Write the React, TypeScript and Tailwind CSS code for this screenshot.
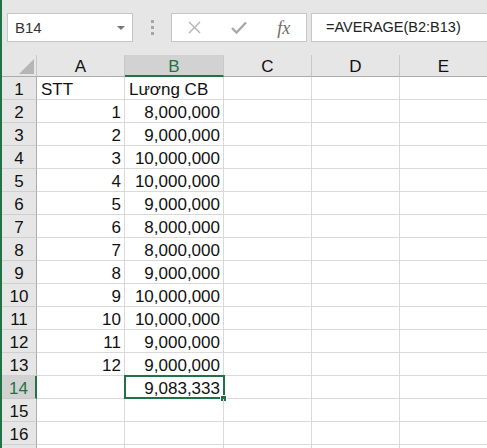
import React from "react";

const cols = ["A", "B", "C", "D", "E"];

const data: { a: string; b: string }[] = [
  { a: "STT", b: "Lương CB" },
  { a: "1", b: "8,000,000" },
  { a: "2", b: "9,000,000" },
  { a: "3", b: "10,000,000" },
  { a: "4", b: "10,000,000" },
  { a: "5", b: "9,000,000" },
  { a: "6", b: "8,000,000" },
  { a: "7", b: "8,000,000" },
  { a: "8", b: "9,000,000" },
  { a: "9", b: "10,000,000" },
  { a: "10", b: "10,000,000" },
  { a: "11", b: "9,000,000" },
  { a: "12", b: "9,000,000" },
  { a: "", b: "9,083,333" },
  { a: "", b: "" },
  { a: "", b: "" },
  { a: "", b: "" },
];

export default function App() {
  return (
    <div className="w-[487px] h-[448px] overflow-hidden bg-white flex font-['Liberation_Sans',Arial,sans-serif] text-[#111]">
      <div className="w-[2px] shrink-0 bg-[#217346]" />
      <div className="flex flex-col w-[485px] shrink-0 overflow-hidden">
        {/* Formula bar */}
        <div className="h-[55px] shrink-0 bg-[#e6e6e6] pt-[13px] flex items-start">
          <div className="ml-[5px] w-[126px] h-[29px] shrink-0 bg-white border border-[#c6c6c6] flex items-center justify-between pl-[7px] pr-[7px]">
            <span className="text-[15px] text-[#333] leading-none">B14</span>
            <span className="w-0 h-0 border-l-[4px] border-r-[4px] border-t-[4px] border-l-transparent border-r-transparent border-t-[#777]" />
          </div>
          <div className="w-[38px] h-[29px] shrink-0 flex flex-col items-center justify-center gap-[3px]">
            <span className="w-[3px] h-[3px] bg-[#a6a6a6]" />
            <span className="w-[3px] h-[3px] bg-[#a6a6a6]" />
            <span className="w-[3px] h-[3px] bg-[#a6a6a6]" />
          </div>
          <div className="w-[136px] h-[29px] shrink-0 bg-white border border-[#c6c6c6] flex items-center">
            <div className="w-[45px] h-full flex items-center justify-center">
              <svg width="13" height="13" viewBox="0 0 13 13">
                <path d="M1 1L12 12M12 1L1 12" stroke="#b3b3b3" strokeWidth="1.4" fill="none" />
              </svg>
            </div>
            <div className="w-[45px] h-full flex items-center justify-center">
              <svg width="16" height="13" viewBox="0 0 16 13">
                <path d="M1 7L5.5 11.5L15 1.5" stroke="#a8a8a8" strokeWidth="2.4" fill="none" />
              </svg>
            </div>
            <div className="w-[45px] h-full flex items-center justify-center">
              <span className="font-['Liberation_Serif',serif] italic text-[18px] text-[#6b6b6b] leading-none">fx</span>
            </div>
          </div>
          <div className="ml-[4px] w-[200px] h-[29px] shrink-0 bg-white border border-[#c6c6c6] flex items-center pl-[14px]">
            <span className="text-[14.5px] text-[#222] leading-none whitespace-nowrap">=AVERAGE(B2:B13)</span>
          </div>
        </div>

        {/* Sheet grid */}
        <div className="grid grid-cols-[35px_88px_99px_88px_88px_88px] text-[17px]">
          {/* header row */}
          <div className="relative h-[22px] bg-[#e6e6e6] border-r border-b border-r-[#c8c8c8] border-b-[#ababab]">
            <svg className="absolute right-[2px] bottom-[2px]" width="15" height="15" viewBox="0 0 15 15">
              <path d="M15 0L15 15L0 15Z" fill="#b5b5b5" />
            </svg>
          </div>
          {cols.map((c) =>
            c === "B" ? (
              <div
                key={c}
                className="h-[22px] bg-[#d2d2d2] border-r border-r-[#c8c8c8] border-b-2 border-b-[#217346] text-center text-[#217346] leading-[24px]"
              >
                {c}
              </div>
            ) : (
              <div
                key={c}
                className="h-[22px] bg-[#e6e6e6] border-r border-b border-r-[#c8c8c8] border-b-[#ababab] text-center leading-[24px]"
              >
                {c}
              </div>
            )
          )}

          {data.map((row, i) => {
            const n = i + 1;
            const sel = n === 14;
            const label = n <= 16 ? n : "";
            const alignA = n === 1 ? "text-left pl-[4px]" : "text-right pr-[3px]";
            const alignB = n === 1 ? "text-left pl-[4px]" : "text-right pr-[3px]";
            return (
              <React.Fragment key={n}>
                {sel ? (
                  <div className="h-[23px] bg-[#d2d2d2] border-b border-b-[#c8c8c8] border-r-2 border-r-[#217346] text-center text-[#217346] leading-[26px]">
                    {label}
                  </div>
                ) : (
                  <div className="h-[23px] bg-[#e6e6e6] border-b border-r border-b-[#cfcfcf] border-r-[#ababab] text-center leading-[26px]">
                    {label}
                  </div>
                )}
                <div className={`h-[23px] border-r border-b border-[#d9d9d9] leading-[26px] whitespace-nowrap ${alignA}`}>
                  {row.a}
                </div>
                <div className={`relative h-[23px] border-r border-b border-[#d9d9d9] leading-[26px] whitespace-nowrap ${alignB}`}>
                  {row.b}
                  {sel && (
                    <>
                      <div className="absolute -top-[1px] -left-[1px] -right-[2px] -bottom-[1px] border-2 border-[#217346]" />
                      <div className="absolute -right-[4px] -bottom-[4px] w-[7px] h-[7px] bg-[#217346] border border-white" />
                    </>
                  )}
                </div>
                <div className="h-[23px] border-r border-b border-[#d9d9d9]" />
                <div className="h-[23px] border-r border-b border-[#d9d9d9]" />
                <div className="h-[23px] border-r border-b border-[#d9d9d9]" />
              </React.Fragment>
            );
          })}
        </div>
      </div>
    </div>
  );
}
